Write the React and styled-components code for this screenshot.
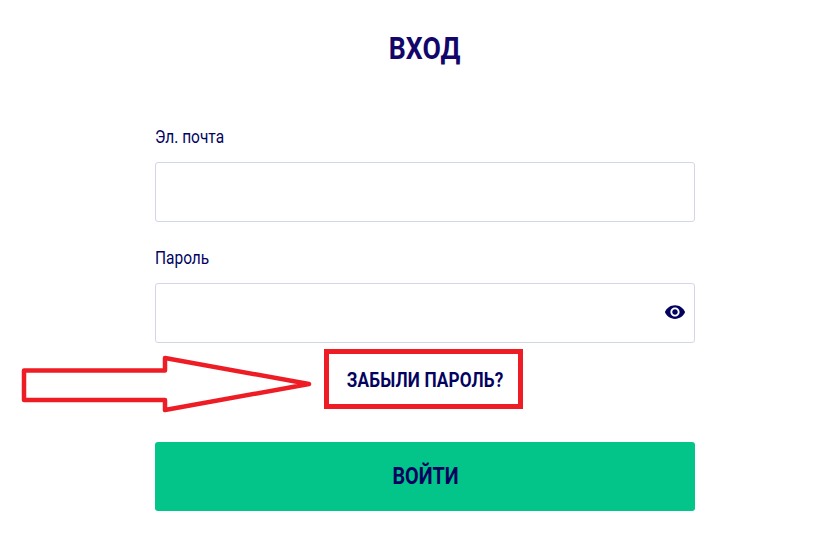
import React from 'react'
import styled, { createGlobalStyle } from 'styled-components'

const navy = '#03035f'
const red = '#ee1c25'

const GlobalStyle = createGlobalStyle`
  html, body {
    margin: 0;
    padding: 0;
    background: #fff;
    font-family: "Roboto", "Liberation Sans", sans-serif;
    color: ${navy};
  }
  * { box-sizing: border-box; }
`

const App = () => (
  <>
    <GlobalStyle />
    <Page>
      <Title><Narrow>ВХОД</Narrow></Title>
      <Form>
        <Field>
          <Label htmlFor="email"><Narrow>Эл. почта</Narrow></Label>
          <InputWrap>
            <Input id="email" type="text" />
          </InputWrap>
        </Field>
        <Field>
          <Label htmlFor="password"><Narrow>Пароль</Narrow></Label>
          <InputWrap>
            <Input id="password" type="password" />
            <EyeButton type="button" aria-label="Показать пароль">
              <svg width="22" height="22" viewBox="0 0 24 24" fill={navy}>
                <path d="M12 4.5C7 4.5 2.73 7.61 1 12c1.73 4.39 6 7.5 11 7.5s9.27-3.11 11-7.5c-1.73-4.39-6-7.5-11-7.5zM12 17c-2.76 0-5-2.24-5-5s2.24-5 5-5 5 2.24 5 5-2.24 5-5 5zm0-8c-1.66 0-3 1.34-3 3s1.34 3 3 3 3-1.34 3-3-1.34-3-3-3z" />
              </svg>
            </EyeButton>
          </InputWrap>
        </Field>
        <ForgotRow>
          <Arrow width="296" height="62" viewBox="0 0 296 62" fill="none">
            <path
              d="M3 15.5H144V3L288 29L144 55V45H3Z"
              stroke={red}
              strokeWidth="4.5"
              strokeLinejoin="round"
            />
          </Arrow>
          <ForgotLink href="#"><Narrow>ЗАБЫЛИ ПАРОЛЬ?</Narrow></ForgotLink>
        </ForgotRow>
        <Submit type="button"><Narrow>ВОЙТИ</Narrow></Submit>
      </Form>
    </Page>
  </>
)

const Page = styled.div`
  width: 814px;
  height: 534px;
  padding: 28px 0 0 36px;
  display: flex;
  flex-direction: column;
  align-items: center;
`

// Roboto Condensed is not installed, so regular Roboto gets squeezed
const Narrow = styled.span`
  display: inline-block;
  transform: scaleX(0.86);
  white-space: nowrap;
`

const Title = styled.h1`
  margin: 0 0 57px;
  height: 42px;
  line-height: 42px;
  font-size: 31px;
  font-weight: 700;
  text-align: center;
  color: #12066b;
`

const Form = styled.form`
  width: 540px;
  display: flex;
  flex-direction: column;
`

const Field = styled.div`
  display: flex;
  flex-direction: column;
  margin-bottom: 26px;

  &:nth-child(2) {
    margin-bottom: 6px;
  }
`

const Label = styled.label`
  height: 20px;
  line-height: 20px;
  margin-bottom: 15px;
  font-size: 18px;
  ${Narrow} {
    transform-origin: left center;
  }
`

const InputWrap = styled.div`
  position: relative;
  height: 60px;
`

const Input = styled.input`
  width: 100%;
  height: 100%;
  padding: 0 48px 0 16px;
  border: 1px solid #d3d6e6;
  border-radius: 3px;
  background: #fff;
  outline: none;
  font: inherit;
  color: ${navy};
`

const EyeButton = styled.button`
  position: absolute;
  top: 17px;
  right: 8px;
  width: 24px;
  height: 24px;
  padding: 0;
  border: 0;
  background: none;
  display: flex;
  align-items: center;
  justify-content: center;
  cursor: pointer;
`

const ForgotRow = styled.div`
  position: relative;
  height: 59px;
  margin-bottom: 34px;
  padding-left: 169px;
`

const Arrow = styled.svg`
  position: absolute;
  left: -134px;
  top: 6px;
`

const ForgotLink = styled.a`
  display: flex;
  align-items: center;
  justify-content: center;
  width: 199px;
  height: 60px;
  padding: 2px 0 0 4px;
  border: 5px solid ${red};
  font-size: 20px;
  font-weight: 700;
  letter-spacing: 0.2px;
  color: ${navy};
  text-decoration: none;
`

const Submit = styled.button`
  height: 69px;
  padding: 0;
  border: 0;
  border-radius: 3px;
  background: #03c589;
  font-family: inherit;
  font-size: 23px;
  font-weight: 700;
  color: ${navy};
  cursor: pointer;
`

export default App
